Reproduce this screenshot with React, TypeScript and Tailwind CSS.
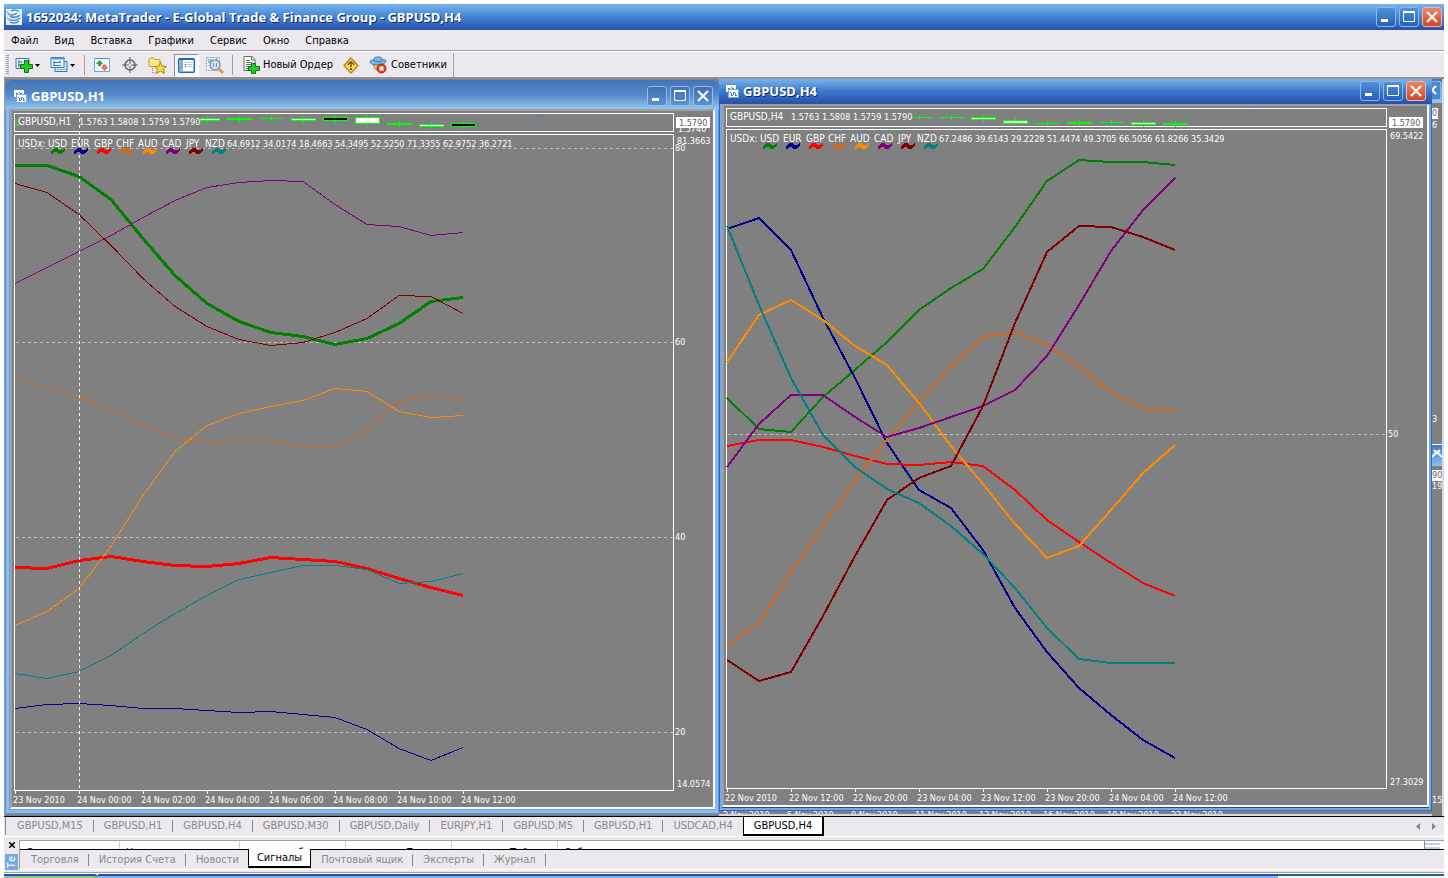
import type { ReactNode } from "react";
import { clsx } from "clsx";

type Line = { color: string; width: number; points: number[] };
type Candle = { x: number; y: number; h: number; fill: string; w?: number };
type ChartData = {
  x: number;
  y: number;
  left: number;
  right: number;
  pane1: [number, number];
  pane2: [number, number];
  symbol: string;
  values: string[];
  marker: number;
  lines: Line[];
  candles: Candle[];
  levels: { y: number; label: string }[];
  scale: { y: number; label: string }[];
  dates: string[];
  clipped?: string;
  cursor?: number;
};

const LIME = "#00ff00";
const STEP = 32;
const QUOTE = ["1.5763", "1.5808", "1.5759", "1.5790"];
const CURRENCIES = [
  { code: "USD", x: 34, color: "#008000" },
  { code: "EUR", x: 57, color: "#00008b" },
  { code: "GBP", x: 80, color: "#ff0000" },
  { code: "CHF", x: 102, color: "#d2691e" },
  { code: "AUD", x: 124, color: "#ff8c00" },
  { code: "CAD", x: 148, color: "#800080" },
  { code: "JPY", x: 172, color: "#800000" },
  { code: "NZD", x: 191, color: "#008080" },
];

const h1: ChartData = {
  x: 12,
  y: 111,
  left: 14,
  right: 673,
  pane1: [113, 131],
  pane2: [134, 790],
  symbol: "GBPUSD,H1",
  values: ["64.6912", "34.0174", "18.4663", "54.3495", "52.5250", "71.3355", "62.9752", "36.2721"],
  marker: 539,
  cursor: 79,
  clipped: "1.5740",
  lines: [
    { color: "#008000", width: 3, points: [165, 165, 176, 199, 238, 275, 303, 321, 332, 336, 344, 338, 323, 301, 297] },
    { color: "#00008b", width: 1, points: [708, 704, 703, 705, 708, 708, 710, 712, 711, 714, 717, 729, 748, 760, 747] },
    { color: "#ff0000", width: 3, points: [567, 568, 560, 556, 561, 565, 566, 563, 557, 559, 561, 568, 578, 587, 595] },
    { color: "#d2691e", width: 1, points: [377, 387, 397, 409, 425, 437, 442, 441, 440, 446, 446, 430, 401, 395, 397] },
    { color: "#ff8c00", width: 1, points: [625, 611, 588, 546, 495, 451, 425, 413, 406, 400, 388, 391, 411, 417, 415] },
    { color: "#800080", width: 1, points: [283, 267, 251, 235, 217, 200, 187, 182, 180, 181, 204, 224, 226, 235, 232] },
    { color: "#800000", width: 1, points: [183, 192, 214, 245, 278, 306, 326, 339, 345, 342, 332, 318, 295, 296, 313] },
    { color: "#008080", width: 1, points: [673, 678, 671, 655, 633, 613, 595, 579, 572, 565, 565, 569, 583, 581, 573] },
  ],
  candles: [
    { x: 15, y: 124, h: 2, fill: LIME, w: 4 },
    { x: 200, y: 118, h: 3, fill: "#ffffff", w: 20 },
    { x: 227, y: 118, h: 2, fill: LIME },
    { x: 259, y: 118, h: 1, fill: LIME },
    { x: 291, y: 118, h: 3, fill: "#ffffff" },
    { x: 323, y: 117, h: 4, fill: "#000000" },
    { x: 355, y: 117, h: 7, fill: "#ffffff" },
    { x: 387, y: 123, h: 2, fill: LIME },
    { x: 419, y: 124, h: 3, fill: "#ffffff" },
    { x: 451, y: 123, h: 4, fill: "#000000" },
  ],
  levels: [
    { y: 148, label: "80" },
    { y: 342, label: "60" },
    { y: 537, label: "40" },
    { y: 732, label: "20" },
  ],
  scale: [
    { y: 144, label: "81.3663" },
    { y: 787, label: "14.0574" },
  ],
  dates: ["23 Nov 2010", "24 Nov 00:00", "24 Nov 02:00", "24 Nov 04:00", "24 Nov 06:00", "24 Nov 08:00", "24 Nov 10:00", "24 Nov 12:00"],
};

const h4: ChartData = {
  x: 724,
  y: 106,
  left: 726,
  right: 1386,
  pane1: [108, 126],
  pane2: [129, 788],
  symbol: "GBPUSD,H4",
  values: ["67.2486", "39.6143", "29.2228", "51.4474", "49.3705", "66.5056", "61.8266", "35.3429"],
  marker: 1252,
  lines: [
    { color: "#008000", width: 2, points: [398, 429, 432, 397, 370, 342, 310, 288, 269, 227, 181, 160, 162, 162, 165] },
    { color: "#00008b", width: 2, points: [229, 218, 250, 318, 378, 443, 490, 508, 550, 608, 652, 688, 715, 740, 758] },
    { color: "#ff0000", width: 2, points: [446, 440, 440, 447, 456, 464, 465, 462, 466, 490, 520, 542, 563, 583, 596] },
    { color: "#d2691e", width: 2, points: [646, 623, 572, 526, 480, 440, 402, 366, 337, 332, 345, 366, 392, 408, 411] },
    { color: "#ff8c00", width: 2, points: [362, 315, 300, 320, 346, 365, 403, 446, 484, 524, 558, 546, 510, 473, 445] },
    { color: "#800080", width: 2, points: [467, 424, 395, 395, 417, 437, 428, 417, 406, 390, 356, 305, 251, 210, 178] },
    { color: "#800000", width: 2, points: [660, 681, 672, 616, 556, 500, 478, 466, 406, 323, 252, 226, 227, 237, 250] },
    { color: "#008080", width: 2, points: [226, 305, 378, 435, 467, 489, 503, 526, 554, 588, 628, 659, 663, 663, 663] },
  ],
  candles: [
    { x: 727, y: 114, h: 1, fill: LIME, w: 4 },
    { x: 912, y: 117, h: 1, fill: LIME, w: 20 },
    { x: 939, y: 117, h: 1, fill: LIME },
    { x: 971, y: 117, h: 3, fill: "#ffffff" },
    { x: 1003, y: 120, h: 4, fill: "#ffffff" },
    { x: 1035, y: 123, h: 1, fill: LIME },
    { x: 1067, y: 122, h: 2, fill: LIME },
    { x: 1099, y: 122, h: 1, fill: LIME },
    { x: 1131, y: 122, h: 3, fill: "#ffffff" },
    { x: 1163, y: 123, h: 2, fill: LIME },
  ],
  levels: [{ y: 434, label: "50" }],
  scale: [
    { y: 139, label: "69.5422" },
    { y: 785, label: "27.3029" },
  ],
  dates: ["22 Nov 2010", "22 Nov 12:00", "22 Nov 20:00", "23 Nov 04:00", "23 Nov 12:00", "23 Nov 20:00", "24 Nov 04:00", "24 Nov 12:00"],
};

function Chart({ data }: { data: ChartData }) {
  const { left, right, pane1, pane2 } = data;
  return (
    <svg className="block size-full" role="img" aria-label={data.symbol} fill="none" fontSize="9" shapeRendering="crispEdges">
      <g transform={`translate(${-data.x} ${-data.y})`}>
        {/* price pane */}
        <rect x={left + 0.5} y={pane1[0] + 0.5} width={right - left} height={pane1[1] - pane1[0]} stroke="#fff" />
        <path d={`M${left + 1} 123.5H${right}`} stroke="#708090" />
        <path d={`M${data.marker - 5} ${pane1[0] + 1}h10l-5 5z`} fill="#708090" />
        {data.candles.map((c) => {
          const w = c.w ?? 25;
          return (
            <g key={c.x}>
              {w > 5 && <path d={`M${c.x + w - 12.5} ${c.y - 2}v${c.h + 4}`} stroke={LIME} />}
              <rect x={c.x} y={c.y} width={w} height={c.h} fill={LIME} />
              {c.fill !== LIME && <rect x={c.x + 1} y={c.y + 1} width={w - 2} height={c.h - 2} fill={c.fill} />}
            </g>
          );
        })}

        {/* indicator pane */}
        <rect x={left + 0.5} y={pane2[0] + 0.5} width={right - left} height={pane2[1] - pane2[0]} stroke="#fff" />
        {data.levels.map((l) => (
          <g key={l.label}>
            <path d={`M${left + 2} ${l.y + 0.5}H${right}`} stroke="#c0c0c0" strokeDasharray="3 3" />
            <text x={right + 2} y={l.y + 3} fill="#fff">{l.label}</text>
          </g>
        ))}
        {data.lines.map((line) => (
          <polyline
            key={line.color}
            stroke={line.color}
            strokeWidth={line.width}
            points={line.points.map((y, i) => `${left + 1 + i * STEP},${y + (line.width % 2) / 2}`).join(" ")}
          />
        ))}
        {data.cursor && (
          <path d={`M${data.cursor + 0.5} ${pane1[0]}V${pane2[1]}`} stroke="#fff" strokeDasharray="3 3" />
        )}

        {/* captions */}
        <text x={left + 4} y={pane1[0] + 12} fontSize="10" fill="#fff">{data.symbol}</text>
        {QUOTE.map((price, i) => (
          <text key={price} x={left + 65 + i * 31} y={pane1[0] + 12} fill="#fff">{price}</text>
        ))}
        <text x={left + 4} y={pane2[0] + 13} fontSize="10" fill="#fff">USDx:</text>
        {CURRENCIES.map(({ code, x, color }, i) => (
          <g key={code}>
            <text x={left + x} y={pane2[0] + 13} fontSize="10" fill="#fff">{code}</text>
            <path
              transform={`translate(${left + 37 + i * 23} ${pane2[0] + 14})`}
              d="M0 6V3L2 1L4 0H6L9 2H11L14 0V2L12 5L10 6H8L5 4H3L1 6Z"
              fill={color}
            />
          </g>
        ))}
        {data.values.map((value, i) => (
          <text key={value} x={left + 213 + i * 36} y={pane2[0] + 13} fill="#fff">{value}</text>
        ))}

        {/* scale */}
        {data.clipped && <text x={right + 5} y={pane1[1] + 1} fill="#fff">{data.clipped}</text>}
        <rect x={right + 3} y="117" width="34" height="11" fill="#fff" />
        <text x={right + 6} y="126" fill="#606060">1.5790</text>
        {data.scale.map((s) => (
          <text key={s.label} x={right + 4} y={s.y} fill="#fff">{s.label}</text>
        ))}
        {data.dates.map((date, i) => (
          <g key={date}>
            <path d={`M${left + 1.5 + i * 64} ${pane2[1]}v4`} stroke="#fff" />
            <text x={left - 1 + i * 64} y={pane2[1] + 13} fill="#fff">{date}</text>
          </g>
        ))}
      </g>
    </svg>
  );
}

function WindowButton({ kind, active }: { kind: "min" | "max" | "close"; active: boolean }) {
  return (
    <button
      type="button"
      aria-label={kind}
      className={clsx(
        "flex size-5 items-center justify-center rounded-[3px] border",
        kind === "close" && active
          ? "border-[#e8b8b0] bg-linear-to-b from-[#e88868] to-[#d04820]"
          : active
            ? "border-[#88b8f0] bg-linear-to-b from-[#5090d8] to-[#2860b8]"
            : "border-[#98bcec] bg-linear-to-b from-[#4070b8] to-[#5890d0]",
      )}
    >
      <svg width="14" height="14" fill="none" stroke="#fff" aria-hidden="true">
        {kind === "min" && <path d="M2 10.5h7" strokeWidth="3" />}
        {kind === "max" && (
          <>
            <path d="M1.5 2.5h11v9h-11z" />
            <path d="M1 2h12" strokeWidth="2" />
          </>
        )}
        {kind === "close" && <path d="M2 2l10 10M12 2L2 12" strokeWidth="2" />}
      </svg>
    </button>
  );
}

function WindowButtons({ active }: { active: boolean }) {
  return (
    <div className="ml-auto flex gap-[3px]">
      <WindowButton kind="min" active={active} />
      <WindowButton kind="max" active={active} />
      <WindowButton kind="close" active={active} />
    </div>
  );
}

function ChartIcon() {
  return (
    <svg width="14" height="14" fill="none" shapeRendering="crispEdges" aria-hidden="true">
      <path d="M1 1h10v7H1z" fill="#fff" />
      <path d="M0 .5h11" stroke="#6888a8" strokeDasharray="1 1" />
      <path d="M3 4.5h2M6 3.5h1M7 4.5h2" stroke="#3878c8" />
      <path d="M3.5 5.5h10v8h-10z" fill="#fff" stroke="#78a8e0" />
      <path d="M5 8.5h1M6 9v3M7 11.5h1M8 8v3M9 8.5h1M10 9v3M11 11.5h1" stroke="#3878c8" />
    </svg>
  );
}

function ChartWindow({ title, active, children }: { title: string; active: boolean; children: ReactNode }) {
  return (
    <section
      className={clsx(
        "flex min-h-0 min-w-0 flex-1 flex-col overflow-hidden",
        active
          ? "bg-[#2848a8] shadow-[inset_0_0_0_1px_#3068c8,inset_0_0_0_3px_#78a8e0]"
          : "rounded-t-md bg-[#68a0e8] shadow-[inset_0_0_0_1px_#5898e8,inset_0_0_0_4px_#88bcf0]",
      )}
    >
      <header
        className={clsx(
          "flex shrink-0 items-center gap-1",
          active
            ? "h-[25px] bg-linear-to-b from-[#78b4ec] via-[#3c78cc] to-[#2850a8] pr-1.5 pb-0.5 pl-1.5"
            : "h-[29px] bg-linear-to-b from-[#4474b8] via-[#5488c8] to-[#94c4ec] pt-0.5 pr-1.5 pl-2",
        )}
      >
        <ChartIcon />
        <h2
          className={clsx(
            "font-['Open_Sans','Noto_Sans',sans-serif] text-[13px] font-bold text-white",
            active && "[text-shadow:1px_1px_0_#102870]",
          )}
        >
          {title}
        </h2>
        <WindowButtons active={active} />
      </header>
      <div
        className={clsx(
          "min-h-0 flex-1 border-2 border-t-[#a0a0a4] border-r-white border-b-white border-l-[#a0a0a4] bg-[#808080]",
          active ? "mx-[3px] mb-1" : "mr-1 mb-[5px] ml-[5px]",
        )}
      >
        {children}
      </div>
    </section>
  );
}

function DropArrow() {
  return (
    <svg width="5" height="3" fill="#000" aria-hidden="true">
      <path d="M0 0h5L2.5 3z" />
    </svg>
  );
}

function NewChartIcon() {
  return (
    <svg width="18" height="16" fill="none" aria-hidden="true">
      <path d="M1 1.5h13v10H1z" fill="#e8f2fc" stroke="#3878b8" />
      <path d="M4 3v7M3 8h4M3 5h5" stroke="#3878b8" />
      <path d="M9.5 3.5h4v4h4v4h-4v4h-4v-4h-4v-4h4z" fill="#28c828" stroke="#087808" />
    </svg>
  );
}

function ProfilesIcon() {
  return (
    <svg width="18" height="16" fill="none" aria-hidden="true">
      <path d="M5 4.5h12v10H5z" fill="#d0e4f8" stroke="#3878b8" />
      <path d="M1 .5h13v10H1z" fill="#f0f8ff" stroke="#3878b8" />
      <path d="M1 1.5h13" stroke="#5898d8" strokeWidth="2" />
      <path d="M4 4v5M3 5.5h8M3 8.5h8M9 4l2 1.5" stroke="#3878b8" />
      <path d="M7 12.5h9" stroke="#88b8e0" />
    </svg>
  );
}

function MarketWatchIcon() {
  return (
    <svg width="16" height="16" fill="none" aria-hidden="true">
      <path d="M.5 1.5h15v13H.5z" fill="#f4faff" stroke="#68a8e0" />
      <path d="M1 1.5h14" stroke="#4890d0" />
      <path d="M5.5 3.5l3 3H7v2H4.500v-2H2.500z" fill="#28b428" stroke="#088008" strokeWidth=".6" />
      <path d="M10.5 13.500l-3-3H9v-2.500h3v2.500h1.500z" fill="#f08050" stroke="#c04010" strokeWidth=".6" />
    </svg>
  );
}

function CrosshairIcon() {
  return (
    <svg width="16" height="16" fill="none" stroke="#606060" aria-hidden="true">
      <circle cx="8" cy="8" r="5" strokeWidth="1.5" />
      <path d="M8 0v7M8 9v7M0 8h7M9 8h7" />
    </svg>
  );
}

function NavigatorIcon() {
  return (
    <svg width="19" height="17" fill="none" aria-hidden="true">
      <path d="M1 2.5l1-1.5h4l1 1.5h5v7H1z" fill="#fce888" stroke="#c8a020" />
      <path d="M4.5 11v5h4" stroke="#808080" strokeDasharray="1 1" />
      <path d="M12.5 5l1.500 4 4.500.5-3 2.500 1 4.500-4-2.500-4 2.500 1-4.500-3-2.500 4.500-.5z" fill="#fcd850" stroke="#b88010" />
    </svg>
  );
}

function TerminalIcon() {
  return (
    <svg width="17" height="15" fill="none" aria-hidden="true">
      <rect x=".75" y=".75" width="15.5" height="13.5" rx="1" fill="#fff" stroke="#2068b8" strokeWidth="1.5" />
      <path d="M1 1.5h15" stroke="#2068b8" />
      <path d="M3.5 2v12" stroke="#78b4e8" strokeWidth="3" />
      <path d="M7 4.5h1M7 8.5h1" stroke="#e03030" />
      <path d="M7 6.5h1" stroke="#303030" />
      <path d="M9 4.5h5M9 6.5h5M9 8.5h5" stroke="#b8ccdc" />
    </svg>
  );
}

function TesterIcon() {
  return (
    <svg width="19" height="18" fill="none" aria-hidden="true">
      <path d="M.5 1.5h13v13H.5z" fill="#f0f4f8" stroke="#90a8b8" strokeDasharray="2 1" />
      <path d="M3 3v4M5 3v5M11 2v4" stroke="#5088b0" />
      <circle cx="9" cy="9" r="5" fill="#c8e4f8" stroke="#8898a8" strokeWidth="1.5" />
      <path d="M7.5 7v4M10.5 7v4" stroke="#68a0c8" />
      <path d="M13 13l4 4" stroke="#d8a040" strokeWidth="3" />
    </svg>
  );
}

function NewOrderIcon() {
  return (
    <svg width="17" height="18" fill="none" aria-hidden="true">
      <path d="M1 .5h8l3 3v11H1z" fill="#fff" stroke="#686868" />
      <path d="M8.5 1v3h3" stroke="#686868" />
      <path d="M3 4.5h4M3 6.5h6M3 8.5h5M3 10.5h3M3 12.5h3" stroke="#707070" />
      <path d="M8.5 7.5h4v3h4v4h-4v3h-4v-3h-3v-4h3z" fill="#28c828" stroke="#087808" />
    </svg>
  );
}

function MetaEditorIcon() {
  return (
    <svg width="16" height="17" fill="none" aria-hidden="true">
      <path d="M8 1l7 7.5L8 16 1 8.5z" fill="#fcdc60" stroke="#b88818" strokeWidth="1.5" strokeLinejoin="round" />
      <path d="M8 4v6M5 8l1-2 2-1 2 1 1 2" stroke="#785010" strokeWidth="1.5" />
      <path d="M8 11v2" stroke="#785010" strokeWidth="2" />
    </svg>
  );
}

function ExpertsIcon() {
  return (
    <svg width="18" height="18" fill="none" aria-hidden="true">
      <path d="M4 8l2 5 6 3 3-8z" fill="#f8d060" stroke="#b88820" />
      <path d="M1 6c0-2 3-2 4-2 0-3 2-3 4-3s4 0 4 3c1 0 4-1 4 1s-4 4-8 4-8-1-8-3z" fill="#78b8e8" stroke="#3078b0" />
      <path d="M5 5c2 1 6 1 8 0" stroke="#3078b0" />
      <circle cx="12.5" cy="12.5" r="4.5" fill="#e84020" stroke="#a82810" />
      <path d="M10.5 10.5h4v4h-4z" fill="#fff" />
    </svg>
  );
}

function Divider() {
  return <span className="h-5 w-px bg-[#a0a0a4]" />;
}

const menu = ["Файл", "Вид", "Вставка", "Графики", "Сервис", "Окно", "Справка"];
const chartTabs = ["GBPUSD,M15", "GBPUSD,H1", "GBPUSD,H4", "GBPUSD,M30", "GBPUSD,Daily", "EURJPY,H1", "GBPUSD,M5", "GBPUSD,H1", "USDCAD,H4", "GBPUSD,H4"];
const terminalTabs = ["Торговля", "История Счета", "Новости", "Сигналы", "Почтовый ящик", "Эксперты", "Журнал"];
const backDates = ["2 Nov 2010", "5 Nov 2010", "8 Nov 2010", "11 Nov 2010", "13 Nov 2010", "16 Nov 2010", "19 Nov 2010", "22 Nov 2010"];

export default function App() {
  return (
    <div className="flex h-screen min-h-[480px] flex-col overflow-hidden bg-white px-1 pt-1 font-['DejaVu_Sans_Condensed','DejaVu_Sans',sans-serif] text-[11px] leading-4 text-black">
      <header className="flex h-[26px] shrink-0 items-center gap-1 bg-linear-to-b from-[#78b4ec] via-[#4484d4] to-[#2850a8] pr-0.5 pb-px pl-0.5">
        <svg width="16" height="16" fill="none" aria-hidden="true">
          <path d="M0 0h16v16H0z" fill="#e8f2fc" />
          <path d="M5 2c3-1.5 6-1 8 .5M2 5c3 1.5 7 1 9-1M4 7.5c4 1.5 8 .5 10-1.5M3 10c3 2 8 2 11-1M4 13c3 1.5 6 1.5 9-1" stroke="#4888c8" strokeWidth="1.5" />
          <path d="M1.5 2c0 2 1 3 3 3.5M1 8c1 2 2 3 3 3.5" stroke="#88b8e0" strokeWidth="1.5" />
        </svg>
        <h1 className="truncate font-['Open_Sans','Noto_Sans',sans-serif] text-[13px] font-bold text-white [text-shadow:1px_1px_0_#102870]">
          1652034: MetaTrader - E-Global Trade &amp; Finance Group - GBPUSD,H4
        </h1>
        <WindowButtons active />
      </header>

      <nav className="flex h-[21px] shrink-0 items-center gap-4 border-b border-[#a0a0a4] bg-[#ebe9ed] pt-px pl-[7px]">
        {menu.map((item) => (
          <button key={item} type="button">{item}</button>
        ))}
      </nav>

      <div className="mt-px flex h-[27px] shrink-0 items-center border-b-2 border-[#909094] bg-[#ebe9ed] pt-px pl-0.5">
        <span className="mr-1.5 h-5 w-[3px] bg-[repeating-linear-gradient(to_bottom,#a0a0a4_0_1px,#ebe9ed_1px_2px)]" />
        <button type="button" aria-label="Новый график" className="flex items-center gap-0.5">
          <NewChartIcon />
          <DropArrow />
        </button>
        <button type="button" aria-label="Профили" className="ml-2.5 flex items-center gap-0.5">
          <ProfilesIcon />
          <DropArrow />
        </button>
        <span className="mx-[9px] flex"><Divider /></span>
        <div className="flex items-center gap-3">
          <button type="button" aria-label="Обзор рынка"><MarketWatchIcon /></button>
          <button type="button" aria-label="Перекрестие"><CrosshairIcon /></button>
        </div>
        <button type="button" aria-label="Навигатор" className="ml-2.5"><NavigatorIcon /></button>
        <button
          type="button"
          aria-label="Терминал"
          aria-pressed="true"
          className="mx-[7px] flex h-[23px] w-[25px] items-center justify-center border border-[#909094] border-r-white border-b-white bg-[#f6f5f8]"
        >
          <TerminalIcon />
        </button>
        <button type="button" aria-label="Тестер"><TesterIcon /></button>
        <span className="mr-2.5 ml-[7px] flex"><Divider /></span>
        <button type="button" className="flex items-center gap-[3px]">
          <NewOrderIcon />
          Новый Ордер
        </button>
        <button type="button" aria-label="Редактор" className="mx-2.5"><MetaEditorIcon /></button>
        <button type="button" className="mr-1.5 flex items-center gap-1">
          <ExpertsIcon />
          Советники
        </button>
        <span className="h-6 w-px bg-[#a0a0a4]" />
      </div>

      <main className="grid min-h-0 flex-1 grid-cols-[715fr_713fr_12px] border-b border-black bg-[#808080]">
        <div className="flex min-h-0 min-w-0 flex-col border-l border-[#a0a0a4] bg-[#808080] pt-px pb-0.5">
          <ChartWindow title="GBPUSD,H1" active={false}>
            <Chart data={h1} />
          </ChartWindow>
        </div>
        <div className="flex min-h-0 min-w-0 flex-col">
          <ChartWindow title="GBPUSD,H4" active>
            <Chart data={h4} />
          </ChartWindow>
          {/* bottom edge of the windows lying underneath */}
          <div className="flex h-[5px] shrink-0 overflow-hidden border-b-2 border-[#d8d8dc] pl-1 text-[9px] leading-[9px] text-white">
            {backDates.map((date) => (
              <span key={date} className="w-16 shrink-0 whitespace-nowrap">{date}</span>
            ))}
          </div>
        </div>
        <div className="flex flex-col overflow-hidden border-r-2 border-[#d8dce4] text-[9px] leading-[11px] text-white">
          <div className="h-6 shrink-0 bg-linear-to-b from-[#4474b8] to-[#94c4ec] pt-0.5">
            <svg width="10" height="20" fill="none" aria-hidden="true">
              <rect x="-10" y="0" width="19" height="19" rx="3" fill="#4888d0" stroke="#b0d0f4" />
              <path d="M-4 5l8 8M4 5l-8 8" stroke="#fff" strokeWidth="2" />
            </svg>
          </div>
          <span className="mt-[5px] w-1.5 bg-white text-[#606060]">0</span>
          <span className="mt-px">6</span>
          <span className="mt-[283px]">3</span>
          <div className="mt-[19px] h-[22px] shrink-0 border-t border-white bg-linear-to-b from-[#3878cc] to-[#90c0ec] pt-0.5">
            <svg width="10" height="12" fill="none" aria-hidden="true">
              <path d="M0 10l5-5 5 5M2 3l3 3 3-3" stroke="#fff" strokeWidth="2" />
            </svg>
          </div>
          <span className="mt-1 bg-white text-[#606060]">90</span>
          <span>199</span>
          <span className="mt-auto mb-[10px]">159</span>
        </div>
      </main>

      <div className="flex h-5 shrink-0 items-start border-b border-white bg-[#ebe9ed] text-[#88888c]">
        <span className="mr-px ml-px h-[18px] w-px bg-[#88888c]" />
        {chartTabs.map((tab, i) => {
          const active = i === chartTabs.length - 1;
          return (
            <button
              key={i}
              type="button"
              className={clsx(
                active
                  ? "h-[19px] border-r-2 border-b-2 border-l border-black bg-white px-2.5 text-black"
                  : "my-[3px] h-3 px-2.5 leading-3",
                !active && i < chartTabs.length - 2 && "border-r border-[#88888c]",
              )}
            >
              {tab}
            </button>
          );
        })}
        <div className="ml-auto flex gap-3 pt-1.5 pr-2">
          <button type="button" aria-label="Назад">
            <svg width="4" height="7" fill="#88888c" aria-hidden="true"><path d="M4 0v7L0 3.5z" /></svg>
          </button>
          <button type="button" aria-label="Вперед">
            <svg width="4" height="7" fill="#88888c" aria-hidden="true"><path d="M0 0v7l4-3.5z" /></svg>
          </button>
        </div>
      </div>

      <section className="flex h-[35px] shrink-0 bg-[#ebe9ed] pt-[3px] pb-0.5">
        <div className="flex w-[15px] flex-col items-center gap-1.5 pt-0.5">
          <button type="button" aria-label="Закрыть">
            <svg width="6" height="6" fill="none" stroke="#000" strokeWidth="1.5" aria-hidden="true">
              <path d="M0 0l6 6M6 0L0 6" />
            </svg>
          </button>
          <span className="flex h-[17px] w-[13px] items-center justify-center overflow-hidden bg-[#78a8dc] text-white">
            <span className="rotate-180 leading-3 [writing-mode:vertical-rl]">Те</span>
          </span>
        </div>
        <div className="flex min-w-0 flex-1 flex-col border-t border-b border-l border-t-[#a0a0a4] border-b-white border-l-[#a0a0a4]">
          <div className="flex h-[9px] shrink-0 overflow-hidden border-b border-black bg-white leading-4">
            <span className="w-[100px] shrink-0 border-r border-[#d0d0d4] pt-1 pl-1.5">С</span>
            <span className="w-[120px] shrink-0 border-r border-[#d0d0d4] pt-1 pl-1.5">Н</span>
            <span className="w-[106px] shrink-0 border-r border-[#d0d0d4] pt-1 pl-[58px]">б</span>
            <span className="w-[106px] shrink-0 border-r border-[#d0d0d4] pt-1 pl-[60px]">П</span>
            <span className="w-[106px] shrink-0 border-r border-[#d0d0d4] pt-1 pl-[58px]">Тай</span>
            <span className="pt-1 pl-1.5">Соб</span>
            <span className="mr-1 ml-auto w-4 border-l border-[#88888c] bg-[repeating-linear-gradient(to_bottom,#ffffff_0_2px,#b8d4f0_2px_4px)]" />
          </div>
          <div className="flex items-start pl-px text-[#88888c]">
            {terminalTabs.map((tab, i) => (
              <button
                key={tab}
                type="button"
                className={clsx(
                  tab === "Сигналы"
                    ? "-mt-px h-[19px] border-x border-b-2 border-black bg-white px-2 text-black"
                    : "my-1 h-3 pr-[9px] pl-2.5 leading-3",
                  i !== 2 && i !== 3 && "border-r border-[#88888c]",
                )}
              >
                {tab}
              </button>
            ))}
          </div>
        </div>
      </section>

      <footer className="flex h-1.5 shrink-0 border-t border-[#a0a0a4] bg-white pt-px">
        <div className="w-[94px] rounded-tr-sm border-t-2 border-[#2850a8] bg-[#88c898]" />
        <div className="flex-1 border-t-2 border-[#2850a8] bg-[#78b8ec]" />
        <div className="w-[166px] border-t-2 border-[#286090] bg-[#f0faff]" />
      </footer>
    </div>
  );
}
